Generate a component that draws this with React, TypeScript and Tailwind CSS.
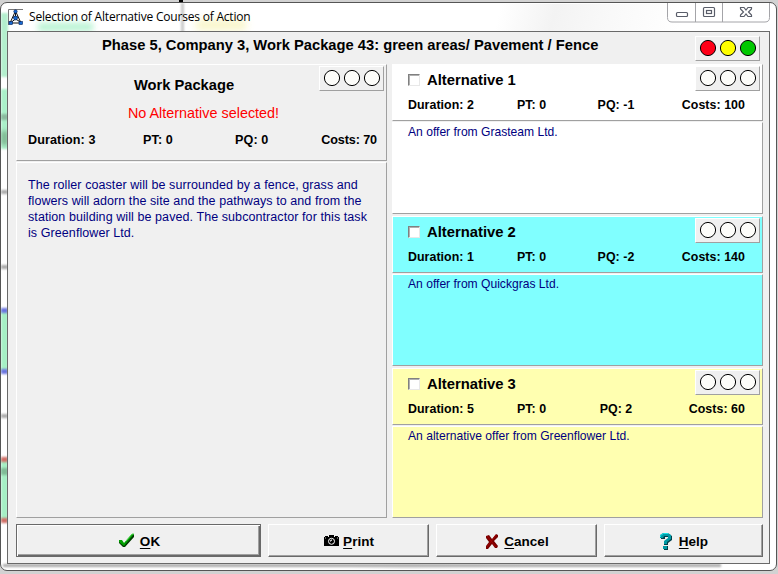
import React from "react";

type LightColors = [string, string, string];
const OFF: LightColors = ["#fdfdfa", "#fdfdfa", "#fdfdfa"];

function Lights({ colors = OFF }: { colors?: LightColors }) {
  return (
    <div className="h-[25px] w-[65px] shrink-0 border-t border-l border-t-white border-l-white border-r border-b border-r-[#a0a0a0] border-b-[#a0a0a0] bg-[#f0f0f0]">
      <svg width="63" height="23" viewBox="0 0 63 23" className="block">
        {colors.map((c, i) => (
          <circle key={i} cx={12 + i * 20} cy="11" r="7.6" fill={c} stroke="#000" strokeWidth="1" />
        ))}
      </svg>
    </div>
  );
}

const EDGE = "border border-t-white border-l-white border-r-[#a0a0a0] border-b-[#a0a0a0]";

interface Alt {
  n: number;
  duration: number;
  pq: string;
  costs: number;
  offer: string;
  bg: string;
}

const ALTS: Alt[] = [
  { n: 1, duration: 2, pq: "-1", costs: 100, offer: "An offer from Grasteam Ltd.", bg: "bg-white" },
  { n: 2, duration: 1, pq: "-2", costs: 140, offer: "An offer from Quickgras Ltd.", bg: "bg-[#80ffff]" },
  { n: 3, duration: 5, pq: "2", costs: 60, offer: "An alternative offer from Greenflower Ltd.", bg: "bg-[#ffffb0]" },
];

function Alternative({ alt }: { alt: Alt }) {
  return (
    <section className="flex h-[150px] flex-col gap-px">
      <div className={`h-[57px] pl-[15px] ${EDGE} ${alt.bg}`}>
        <div className="flex h-[27px] justify-between pt-px pr-[2px]">
          <div className="flex pt-[7px]">
            <span className="mt-px h-3 w-3 border border-t-[#808080] border-l-[#808080] border-r-[#e8e8e8] border-b-[#e8e8e8] bg-white shadow-[inset_1px_1px_0_#b0b0b0]" />
            <span className="ml-[7px] text-[14.8px] leading-[14px] font-bold">Alternative {alt.n}</span>
          </div>
          <Lights />
        </div>
        <div className="flex pt-[5px] pr-[17px] text-[12.4px] leading-[17px] font-bold tracking-[0.05px]">
          <span className="w-[109px]">Duration: {alt.duration}</span>
          <span className="w-[69px]">PT: 0</span>
          <span className="w-[60px] text-center">PQ: {alt.pq}</span>
          <span className="ml-auto">Costs: {alt.costs}</span>
        </div>
      </div>
      <div className={`h-[92px] pt-[2px] pl-[15px] text-[12.1px] leading-[15px] text-[#000080] ${EDGE} ${alt.bg}`}>
        {alt.offer}
      </div>
    </section>
  );
}

function CheckIcon() {
  return (
    <svg width="17" height="16" viewBox="0 0 17 16">
      <path d="M1 8h3l2 3 8-10h2v3L7 14H5L1 10Z" fill="#003b00" />
      <path d="M1 7h3l2 3 8-9h2L6 13 1 9Z" fill="#00a000" />
      <path d="m8 8 6-7h2" fill="none" stroke="#5bd85b" />
    </svg>
  );
}

function CameraIcon() {
  return (
    <svg width="15" height="12" viewBox="0 0 15 12">
      <path d="M0 2h1V1h3v1h1V0h5v2h1V1h3v1h1v9H0Z" fill="#000" />
      <circle cx="7.5" cy="6.3" r="3" fill="#000" stroke="#fff" />
      <path d="M6 6h1V5h1" stroke="#fff" fill="none" />
      <path d="M1 3h1M13 3h1" stroke="#bbb" />
    </svg>
  );
}

function CrossIcon() {
  return (
    <svg width="14" height="15" viewBox="0 0 14 15">
      <path d="M1 2 4 1l3 4 4-5 2 1v2L9 7l4 5-1 2h-2l-3-4-4 5H1v-3l3-4-3-4Z" fill="#780000" />
      <path d="m2 2 9 11M11 1 2 13" stroke="#a40000" fill="none" />
    </svg>
  );
}

function HelpIcon() {
  return (
    <svg width="12" height="17" viewBox="0 0 12 17">
      <path d="M1 6V3l3-2h5l3 2v4l-4 3v2H4V9l4-3V4H5v2Z" fill="#00404a" />
      <path d="M4 13h4v4H4Z" fill="#00404a" />
      <path d="M0 5V2l3-2h5l3 2v4L7 9v2H4V8l4-3V3H4L3 5Z" fill="#009aa5" />
      <path d="M3 13h4v3H3Z" fill="#009aa5" />
      <path d="M.5 4V2.500l3-2H8" fill="none" stroke="#19e4e8" />
    </svg>
  );
}

interface ButtonProps {
  label: string;
  icon: React.ReactNode;
  size: string;
  primary?: boolean;
}

function ActionButton({ label, icon, size, primary }: ButtonProps) {
  const frame = primary
    ? "border border-[#696969] shadow-[inset_1px_1px_0_#fff,inset_-1px_-1px_0_#696969,inset_-2px_-2px_0_#a0a0a0]"
    : "border border-t-white border-l-white border-r-[#696969] border-b-[#696969] shadow-[inset_-1px_-1px_0_#a0a0a0]";
  return (
    <button className={`flex h-[33px] items-center justify-center bg-[#f0f0f0] pt-px pl-px text-[13.5px] leading-[16px] font-bold ${frame} ${size}`}>
      {icon}
      <span className="pt-px">
        <span className="underline decoration-1 underline-offset-2">{label[0]}</span>
        {label.slice(1)}
      </span>
    </button>
  );
}

function AppIcon() {
  return (
    <svg width="16" height="17" viewBox="0 0 16 17" className="mt-[6px] ml-[7px]">
      <path d="M.5 16V.5H15" fill="none" stroke="#777" />
      <path d="M7.500 2 2 14h11Z" fill="#fff" stroke="#111" />
      <path d="M7.500 3v7l-4 3m4-3 5 3M5 8h5" stroke="#111" fill="none" />
      <g fill="#1769d2" stroke="#001c56" strokeWidth=".6">
        <circle cx="7.500" cy="2.500" r="1.700" />
        <circle cx="7.500" cy="9" r="2" />
        <rect x="1" y="12.500" width="3.500" height="3" />
        <rect x="11" y="12.500" width="3.500" height="3" />
      </g>
    </svg>
  );
}

function WindowControls() {
  return (
    <svg width="103" height="20" viewBox="0 0 103 20" className="mr-[6px] ml-auto">
      <path d="M.5 0v14.500q0 4.500 4.500 4.500h93q4.500 0 4.500-4.500V0M28.500 0v19M55.500 0v19" fill="none" stroke="#a4a4a8" />
      <g fill="#fff" stroke="#595d69" strokeWidth="1.2">
        <rect x="9.500" y="9.500" width="11" height="4" rx="1" />
        <rect x="36.500" y="4.500" width="11" height="9" rx="1" />
        <rect x="39.500" y="7.500" width="5" height="3" />
        <path d="M73.500 4.500h3.500L79 7l2-2.500h3.500V6l-3 3 3 3v1.500H81l-2-2.500-2 2.500h-3.500V12l3-3-3-3Z" />
      </g>
    </svg>
  );
}

/* Desktop content showing faintly through the translucent window frame. */
function GlassTint() {
  return (
    <div className="pointer-events-none absolute inset-0 overflow-hidden">
      <div className="absolute top-[20px] left-[37px] h-[8px] w-[55px] bg-[#b4f3d0] blur-[3px]" />
      <div className="absolute top-[17px] left-[195px] h-[10px] w-[50px] bg-[#f8f5c4] blur-[4px]" />
      <div className="absolute top-0 left-[180px] h-[30px] w-[3px] bg-[#c8c8c8] blur-[1px]" />
      <div className="absolute top-[10px] left-0 h-[64px] w-[7px] bg-[#b3efcd] blur-[1px]" />
      <div className="absolute top-[86px] left-0 h-[60px] w-[7px] bg-[#aaf0c9] blur-[1px]" />
      <div className="absolute top-[111px] left-0 h-[6px] w-[7px] bg-[#8bb99e] blur-[1px]" />
      <div className="absolute top-[128px] left-0 h-[14px] w-[7px] bg-[#80b893] blur-[2px]" />
      <div className="absolute top-[187px] left-0 h-[4px] w-[7px] bg-[#aaa] blur-[1px]" />
      <div className="absolute top-[262px] left-0 h-[4px] w-[7px] bg-[#aaa] blur-[1px]" />
      <div className="absolute top-[308px] left-0 h-[60px] w-[7px] bg-[#a5efc4] blur-[1px]" />
      <div className="absolute top-[305px] left-0 h-[5px] w-[7px] bg-[#6974df] blur-[1px]" />
      <div className="absolute top-[366px] left-0 h-[5px] w-[7px] bg-[#6974df] blur-[1px]" />
      <div className="absolute top-[411px] left-0 h-[4px] w-[7px] bg-[#aaa] blur-[1px]" />
      <div className="absolute top-[457px] left-0 h-[60px] w-[7px] bg-[#a5efc4] blur-[1px]" />
      <div className="absolute top-[454px] left-0 h-[5px] w-[7px] bg-[#d06e66] blur-[1px]" />
      <div className="absolute top-[465px] left-0 h-[7px] w-[7px] bg-[#80bb96] blur-[1px]" />
      <div className="absolute top-[515px] left-0 h-[5px] w-[7px] bg-[#d06e66] blur-[1px]" />
      <div className="absolute top-[561px] left-[2px] h-[3px] w-[718px] bg-[#aaa] blur-[1px]" />
    </div>
  );
}

export default function App() {
  return (
    <div className="relative h-[574px] w-[778px] overflow-hidden bg-[#d2d2d2] pt-[2px] font-['Liberation_Sans',Arial,sans-serif] text-black">
      <div className="absolute top-0 left-[179px] h-[2px] w-[4px] bg-black" />
      <div className="relative h-[569px] w-[777px] overflow-hidden rounded-[7px] border border-[#555] bg-[linear-gradient(105deg,#fff_0%,#fff_54%,#f3f3f3_60%,#f8f8f8_65%,#fff_74%)] shadow-[inset_0_0_0_1px_#fff]">
        <GlassTint />
        <header className="relative flex h-[28px]">
          <AppIcon />
          <h1 className="ml-[5px] pt-[6px] font-['Open_Sans','Noto_Sans',sans-serif] text-[12px] leading-[16px] tracking-[-0.2px] whitespace-nowrap">
            Selection of Alternative Courses of Action
          </h1>
          <WindowControls />
        </header>
        <main className="relative ml-[6px] h-[533px] w-[763px] border border-[#696969] bg-[#f0f0f0]">
          <div className="flex h-[32px] pt-[4px] pl-[94px]">
            <h2 className="pt-[1px] text-[14.72px] leading-[16px] font-bold whitespace-nowrap">
              Phase 5, Company 3, Work Package 43: green areas/ Pavement / Fence
            </h2>
            <div className="mr-[9px] ml-auto">
              <Lights colors={["#ff0018", "#ffff00", "#00c800"]} />
            </div>
          </div>
          <div className="flex gap-[5px] pl-[8px]">
            <section className="flex w-[371px] flex-col gap-px">
              <div className={`relative h-[97px] ${EDGE}`}>
                <div className="absolute top-px right-[2px]">
                  <Lights />
                </div>
                <h3 className="pt-[12px] pr-[35px] text-center text-[14.7px] leading-[16px] font-bold">Work Package</h3>
                <p className="pt-[12px] pl-[4px] text-center text-[14.4px] leading-[16px] text-[#f00]">No Alternative selected!</p>
                <div className="flex pt-[11px] pr-[9px] pl-[11px] text-[12.6px] leading-[17px] font-bold tracking-[0.1px]">
                  <span className="w-[115px]">Duration: 3</span>
                  <span className="w-[92px]">PT: 0</span>
                  <span>PQ: 0</span>
                  <span className="ml-auto tracking-[-0.1px]">Costs: 70</span>
                </div>
              </div>
              <div className={`h-[356px] pt-[14px] pl-[11px] text-[12.5px] leading-[16px] tracking-[0.08px] whitespace-nowrap text-[#000080] ${EDGE}`}>
                The roller coaster will be surrounded by a fence, grass and
                <br />
                flowers will adorn the site and the pathways to and from the
                <br />
                station building will be paved. The subcontractor for this task
                <br />
                is Greenflower Ltd.
              </div>
            </section>
            <div className="flex w-[371px] flex-col gap-[2px]">
              {ALTS.map((alt) => (
                <Alternative key={alt.n} alt={alt} />
              ))}
            </div>
          </div>
          <footer className="mt-[6px] flex gap-[7px] pl-[8px]">
            <ActionButton label="OK" icon={<span className="mr-[5px]"><CheckIcon /></span>} size="w-[245px]" primary />
            <ActionButton label="Print" icon={<span className="mr-[4px]"><CameraIcon /></span>} size="w-[161px]" />
            <ActionButton label="Cancel" icon={<span className="mr-[5px]"><CrossIcon /></span>} size="w-[161px]" />
            <ActionButton label="Help" icon={<span className="mr-[7px]"><HelpIcon /></span>} size="w-[159px]" />
          </footer>
        </main>
      </div>
    </div>
  );
}
